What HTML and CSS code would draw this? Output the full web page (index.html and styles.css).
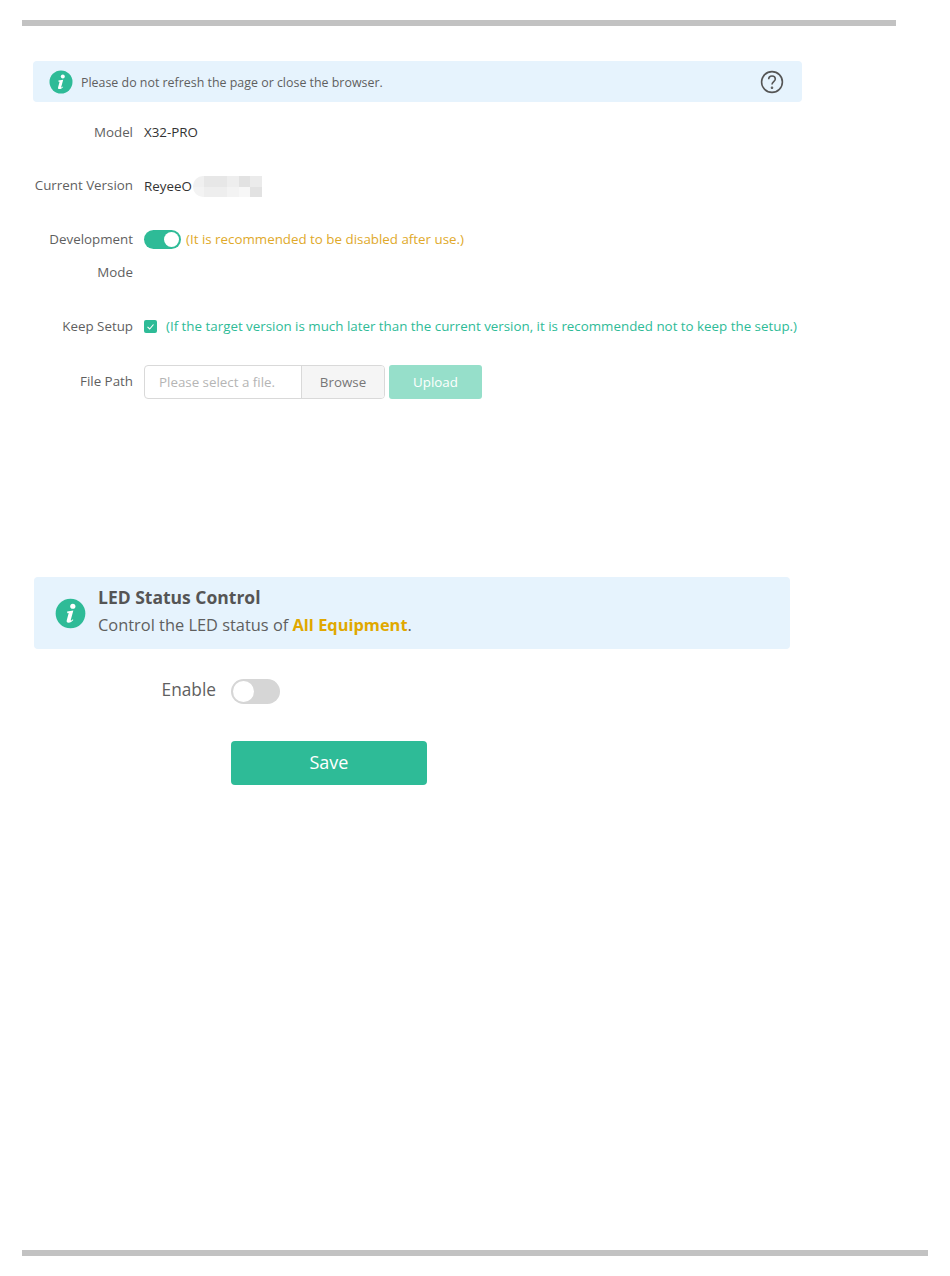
FILE: index.html

```html
<!DOCTYPE html>
<html lang="en">
<head>
  <meta charset="UTF-8">
  <title>System Upgrade</title>
  <link rel="stylesheet" href="styles.css">
</head>
<body>
  <div class="rule rule-top"></div>

  <div class="upgrade">
    <div class="notice">
      <svg class="info-icon" width="24" height="24" viewBox="0 0 24 24">
        <circle cx="12" cy="12" r="11.5" fill="#2ebb97"/>
        <circle cx="13.8" cy="6.400" r="2" fill="#fff"/>
        <path d="M9.400 10.400l4.800-.7-2 7.300c-.1.500.3.600.7.300l1-.8.300.500c-1 1.200-2.300 2.100-3.700 2.100-1.300 0-1.700-.7-1.400-1.900l1.500-5.500-1.100.1z" fill="#fff"/>
      </svg>
      <span class="notice-text">Please do not refresh the page or close the browser.</span>
      <svg class="help-icon" width="24" height="24" viewBox="0 0 24 24" fill="none" stroke="#555" stroke-width="1.600">
        <circle cx="12" cy="12" r="10.400"/>
        <path d="M8.700 9.300c0-2 1.500-3.300 3.300-3.300s3.300 1.200 3.300 3c0 2.600-3.300 2.700-3.300 5.600"/>
        <circle cx="12" cy="17.700" r="0.500"/>
      </svg>
    </div>

    <div class="row row-model">
      <div class="label">Model</div>
      <div class="value">X32-PRO</div>
    </div>

    <div class="row row-version">
      <div class="label">Current Version</div>
      <div class="value">ReyeeO<span class="mosaic"><i class="a"></i><i class="b"></i><i class="b"></i><i class="c"></i><i class="d"></i><i class="e"></i><i class="f"></i><i class="c"></i><i class="c"></i><i class="f"></i><i class="g"></i><i class="d"></i></span></div>
    </div>

    <div class="row row-dev">
      <div class="label label-wrap">Development Mode</div>
      <div class="value">
        <span class="switch-on"><span class="knob"></span></span>
        <span class="warn">(It is recommended to be disabled after use.)</span>
      </div>
    </div>

    <div class="row row-keep">
      <div class="label">Keep Setup</div>
      <div class="value">
        <span class="checkbox">
          <svg width="13" height="13" viewBox="0 0 13 13" fill="none" stroke="#fff" stroke-width="1.100"><path d="M3.500 6.800l2.200 2.200 3.800-4.500"/></svg>
        </span>
        <span class="hint">(If the target version is much later than the current version, it is recommended not to keep the setup.)</span>
      </div>
    </div>

    <div class="row row-file">
      <div class="label">File Path</div>
      <div class="value">
        <div class="file-box">
          <span class="file-input">Please select a file.</span>
          <span class="file-browse">Browse</span>
        </div>
        <button class="btn-upload">Upload</button>
      </div>
    </div>
  </div>

  <div class="led">
    <div class="led-banner">
      <svg class="led-icon" width="31" height="31" viewBox="0 0 24 24">
        <circle cx="12" cy="12" r="11.500" fill="#2ebb97"/>
        <circle cx="13.800" cy="6.400" r="2" fill="#fff"/>
        <path d="M9.400 10.400l4.800-.7-2 7.300c-.1.500.3.600.7.300l1-.8.300.500c-1 1.200-2.300 2.100-3.700 2.100-1.300 0-1.700-.7-1.400-1.900l1.500-5.500-1.100.1z" fill="#fff"/>
      </svg>
      <div class="led-copy">
        <div class="led-title">LED Status Control</div>
        <div class="led-desc">Control the LED status of <b>All Equipment</b>.</div>
      </div>
    </div>

    <div class="led-row">
      <div class="led-label">Enable</div>
      <span class="switch-off"><span class="knob"></span></span>
    </div>

    <button class="btn-save">Save</button>
  </div>

  <div class="rule rule-bottom"></div>
</body>
</html>
```

FILE: styles.css

```css
body {
  margin: 0;
  height: 1276px;
  overflow: hidden;
  background: #fff;
  font-family: "Open Sans", "Noto Sans", sans-serif;
  font-size: 13.35px;
  color: #5f5f5f;
  display: flex;
  flex-direction: column;
}
.rule {
  height: 6px;
  background: #c2c2c2;
  margin-left: 22px;
}
.rule-top {
  width: 874px;
  margin-top: 20px;
}
.rule-bottom {
  width: 906px;
  margin-top: auto;
  margin-bottom: 20px;
}
.upgrade {
  margin: 35px 0 0 33px;
  width: 769px;
}
.notice {
  height: 41px;
  background: #e6f3fd;
  border-radius: 4px;
  display: flex;
  align-items: center;
  padding: 0 18px 0 16px;
}
.info-icon {
  margin-right: 8px;
}
.notice-text {
  font-size: 12.42px;
  flex: 1;
  padding-top: 2px;
}
.row {
  display: flex;
  line-height: 33px;
}
.label {
  width: 100px;
  text-align: right;
  margin-right: 11px;
  flex: none;
}
.value {
  color: #333;
  display: flex;
  align-items: center;
  height: 33px;
  white-space: nowrap;
}
.row-model { margin-top: 14px; }
.row-version { margin-top: 21px; }
.row-version .label { margin-top: -1px; }
.row-dev { margin-top: 20px; }
.row-keep { margin-top: 21px; }
.row-file { margin-top: 22px; }
.mosaic {
  display: grid;
  grid-template-columns: repeat(6, 11.500px);
  grid-template-rows: 11px 10px;
  border-radius: 10px 0 0 10px;
  overflow: hidden;
  margin: 0 0 0 1px;
}
.mosaic i.a { background: #f0f0f0; }
.mosaic i.b { background: #e7e7e7; }
.mosaic i.c { background: #eeeeee; }
.mosaic i.d { background: #e2e2e2; }
.mosaic i.e { background: #ebebeb; }
.mosaic i.f { background: #f3f3f3; }
.mosaic i.g { background: #f7f7f7; }
.switch-on, .switch-off {
  display: inline-block;
  position: relative;
  flex: none;
}
.switch-on {
  width: 37px;
  height: 19px;
  border-radius: 10px;
  background: #2ebb97;
}
.switch-on .knob {
  position: absolute;
  right: 2px;
  top: 2px;
  width: 15px;
  height: 15px;
  border-radius: 50%;
  background: #fff;
}
.warn {
  color: #e0a92a;
  margin-left: 5px;
}
.checkbox {
  width: 13px;
  height: 13px;
  background: #2ebb97;
  border-radius: 2px;
  display: flex;
  flex: none;
}
.hint {
  color: #2ebb97;
  margin-left: 9px;
}
.file-box {
  display: flex;
  width: 241px;
  height: 34px;
  box-sizing: border-box;
  border: 1px solid #d9d9d9;
  border-radius: 4px;
  line-height: 32px;
}
.file-input {
  width: 156px;
  box-sizing: border-box;
  padding-left: 14px;
  color: #b5b5b5;
}
.file-browse {
  flex: 1;
  text-align: center;
  color: #777;
  background: #f5f5f5;
  border-left: 1px solid #d9d9d9;
  border-radius: 0 3px 3px 0;
}
.btn-upload {
  width: 93px;
  height: 34px;
  margin-left: 4px;
  border: none;
  border-radius: 3px;
  background: #96dfca;
  color: #fff;
  font: inherit;
}
.led {
  margin: 179px 0 0 34px;
}
.led-banner {
  width: 756px;
  height: 72px;
  background: #e6f3fd;
  border-radius: 4px;
  display: flex;
  align-items: center;
  box-sizing: border-box;
  padding-left: 21px;
}
.led-icon {
  margin-right: 12px;
}
.led-copy {
  padding-bottom: 4px;
}
.led-title {
  font-size: 17.500px;
  font-weight: 700;
  line-height: 28px;
  color: #555;
}
.led-desc {
  font-size: 16.400px;
  line-height: 28px;
}
.led-desc b {
  color: #e0a800;
}
.led-row {
  display: flex;
  align-items: center;
  margin-top: 29px;
}
.led-label {
  width: 182px;
  text-align: right;
  font-size: 17.300px;
  margin-right: 15px;
  padding-bottom: 3px;
}
.switch-off {
  width: 49px;
  height: 25px;
  border-radius: 13px;
  background: #d6d6d6;
}
.switch-off .knob {
  position: absolute;
  left: 2px;
  top: 2px;
  width: 21px;
  height: 21px;
  border-radius: 50%;
  background: #fff;
}
.btn-save {
  display: block;
  width: 196px;
  height: 44px;
  margin: 37px 0 0 197px;
  padding-bottom: 3px;
  border: none;
  border-radius: 4px;
  background: #2ebb97;
  color: #fff;
  font-family: inherit;
  font-size: 18px;
}
```
